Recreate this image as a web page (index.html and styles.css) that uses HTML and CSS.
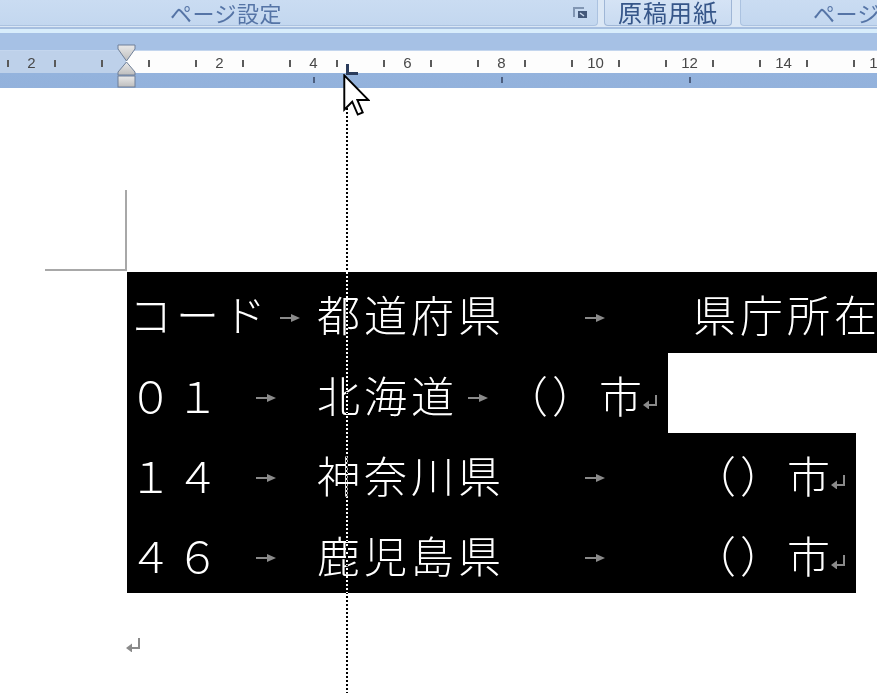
FILE: index.html
```html
<!DOCTYPE html>
<html lang="ja">
<head>
<meta charset="utf-8">
<title>原稿用紙</title>
<link rel="stylesheet" href="styles.css">
</head>
<body>
<div class="app">
  <div class="ribbon">
    <div class="group g1">
      <span class="glabel">ページ設定</span>
      <svg class="launcher" width="15" height="12" viewBox="0 0 15 12">
        <path d="M1 10V1h10" fill="none" stroke="#8196b3" stroke-width="2"/>
        <rect x="5" y="4" width="9" height="7" fill="#44597a"/>
        <path d="M7 6l4 3" stroke="#c9d8ec" stroke-width="1.5"/>
      </svg>
    </div>
    <div class="group g2"><span class="blabel">原稿用紙</span></div>
    <div class="group g3"><span class="glabel">ページ</span></div>
  </div>
  <div class="ribbon-edge"></div>
  <div class="ruler">
    <div class="strip">
      <span class="cell"></span><i class="tick"></i>
      <span class="cell">2</span><i class="tick"></i>
      <span class="cell"></span><i class="tick"></i>
      <span class="cell"></span><i class="tick"></i>
      <span class="cell"></span><i class="tick"></i>
      <span class="cell">2</span><i class="tick"></i>
      <span class="cell"></span><i class="tick"></i>
      <span class="cell">4</span><i class="tick"></i>
      <span class="cell"></span><i class="tick"></i>
      <span class="cell">6</span><i class="tick"></i>
      <span class="cell"></span><i class="tick"></i>
      <span class="cell">8</span><i class="tick"></i>
      <span class="cell"></span><i class="tick"></i>
      <span class="cell">10</span><i class="tick"></i>
      <span class="cell"></span><i class="tick"></i>
      <span class="cell">12</span><i class="tick"></i>
      <span class="cell"></span><i class="tick"></i>
      <span class="cell">14</span><i class="tick"></i>
      <span class="cell"></span><i class="tick"></i>
      <span class="cell">16</span><i class="tick"></i>
      <span class="cell"></span>
    </div>
    <div class="stops">
      <span class="stop"><i class="stick"></i></span>
      <span class="stop"><i class="stick"></i></span>
      <span class="stop"><i class="stick"></i></span>
      <span class="stop"><i class="stick"></i></span>
    </div>
    <svg class="indent" width="19" height="44" viewBox="0 0 19 44">
      <defs>
        <linearGradient id="ig" x1="0" y1="0" x2="0" y2="1">
          <stop offset="0" stop-color="#eaeaea"/>
          <stop offset="1" stop-color="#bdbdbd"/>
        </linearGradient>
      </defs>
      <polygon points="1,1 18,1 18,5 9.5,17 1,5" fill="url(#ig)" stroke="#6e7f98" stroke-width="1"/>
      <polygon points="9.5,18 18,28 18,31 1,31 1,28" fill="url(#ig)" stroke="#6e7f98" stroke-width="1"/>
      <rect x="1" y="32" width="17" height="11" fill="url(#ig)" stroke="#6e7f98" stroke-width="1"/>
    </svg>
    <svg class="tabstop" width="12" height="11" viewBox="0 0 12 11">
      <path d="M1.5 0V9.5H12" fill="none" stroke="#2b3c5c" stroke-width="3"/>
    </svg>
  </div>
  <div class="page">
    <div class="corner"></div>
    <div class="doc">
      <div class="line l1">
        <span class="tx">コード</span>
        <span class="tab w1"><svg class="arr" width="20" height="8" viewBox="0 0 20 8"><path d="M0 4H13" stroke="#8a8a8a" stroke-width="2"/><polygon points="11,0 20,4 11,8" fill="#8a8a8a"/></svg></span>
        <span class="tx">都道府県</span>
        <span class="tab w4"><svg class="arr" width="20" height="8" viewBox="0 0 20 8"><path d="M0 4H13" stroke="#8a8a8a" stroke-width="2"/><polygon points="11,0 20,4 11,8" fill="#8a8a8a"/></svg></span>
        <span class="tx">県庁所在地</span>
      </div>
      <div class="line">
        <span class="tx">０１</span>
        <span class="tab w2"><svg class="arr" width="20" height="8" viewBox="0 0 20 8"><path d="M0 4H13" stroke="#8a8a8a" stroke-width="2"/><polygon points="11,0 20,4 11,8" fill="#8a8a8a"/></svg></span>
        <span class="tx">北海道</span>
        <span class="tab w1"><svg class="arr" width="20" height="8" viewBox="0 0 20 8"><path d="M0 4H13" stroke="#8a8a8a" stroke-width="2"/><polygon points="11,0 20,4 11,8" fill="#8a8a8a"/></svg></span>
        <span class="tx">（）市</span>
        <span class="ret"><svg width="16" height="14" viewBox="0 0 16 14"><path d="M13 0V10H4" fill="none" stroke="#8a8a8a" stroke-width="2"/><polygon points="0,10 6,5.5 6,14.5" fill="#8a8a8a"/></svg></span>
      </div>
      <div class="line">
        <span class="tx">１４</span>
        <span class="tab w2"><svg class="arr" width="20" height="8" viewBox="0 0 20 8"><path d="M0 4H13" stroke="#8a8a8a" stroke-width="2"/><polygon points="11,0 20,4 11,8" fill="#8a8a8a"/></svg></span>
        <span class="tx">神奈川県</span>
        <span class="tab w4"><svg class="arr" width="20" height="8" viewBox="0 0 20 8"><path d="M0 4H13" stroke="#8a8a8a" stroke-width="2"/><polygon points="11,0 20,4 11,8" fill="#8a8a8a"/></svg></span>
        <span class="tx">（）市</span>
        <span class="ret"><svg width="16" height="14" viewBox="0 0 16 14"><path d="M13 0V10H4" fill="none" stroke="#8a8a8a" stroke-width="2"/><polygon points="0,10 6,5.5 6,14.5" fill="#8a8a8a"/></svg></span>
      </div>
      <div class="line">
        <span class="tx">４６</span>
        <span class="tab w2"><svg class="arr" width="20" height="8" viewBox="0 0 20 8"><path d="M0 4H13" stroke="#8a8a8a" stroke-width="2"/><polygon points="11,0 20,4 11,8" fill="#8a8a8a"/></svg></span>
        <span class="tx">鹿児島県</span>
        <span class="tab w4"><svg class="arr" width="20" height="8" viewBox="0 0 20 8"><path d="M0 4H13" stroke="#8a8a8a" stroke-width="2"/><polygon points="11,0 20,4 11,8" fill="#8a8a8a"/></svg></span>
        <span class="tx">（）市</span>
        <span class="ret"><svg width="16" height="14" viewBox="0 0 16 14"><path d="M13 0V10H4" fill="none" stroke="#8a8a8a" stroke-width="2"/><polygon points="0,10 6,5.5 6,14.5" fill="#8a8a8a"/></svg></span>
      </div>
      <div class="line empty">
        <span class="ret"><svg width="16" height="14" viewBox="0 0 16 14"><path d="M13 0V10H4" fill="none" stroke="#8a8a8a" stroke-width="2"/><polygon points="0,10 6,5.5 6,14.5" fill="#8a8a8a"/></svg></span>
      </div>
    </div>
  </div>
  <div class="guide"></div>
  <svg class="cursor" width="27" height="43" viewBox="0 0 12.6 20">
    <path d="M0.6 0.6V16.6L4.3 12.9L6.9 18.9L9.2 17.9L6.7 12.1H11.9Z" fill="#fff" stroke="#000" stroke-width="0.9" stroke-linejoin="miter"/>
  </svg>
</div>
</body>
</html>
```

FILE: styles.css
```css
html, body {
  margin: 0;
  padding: 0;
  background: #ffffff;
}
body {
  width: 877px;
  height: 693px;
  overflow: hidden;
  font-family: "Noto Sans CJK JP", "Liberation Sans", sans-serif;
}
.app {
  position: relative;
  width: 877px;
  height: 693px;
  overflow: hidden;
  display: flex;
  flex-direction: column;
}

/* ribbon */
.ribbon {
  height: 27px;
  display: flex;
  background: #dbe7f5;
  flex: none;
}
.group {
  height: 26px;
  display: flex;
  align-items: flex-start;
  background: linear-gradient(#cadcf2, #c3d7ef);
  border: 1px solid #abc2e0;
  border-top: none;
  border-radius: 0 0 4px 4px;
  box-sizing: border-box;
  flex: none;
}
.g1 {
  width: 598px;
  padding-left: 170px;
  padding-right: 9px;
  border-left: none;
  border-radius: 0 0 4px 0;
}
.g2 {
  width: 128px;
  margin-left: 6px;
  justify-content: center;
  background: linear-gradient(#d5e3f5, #c9dbf1);
  border-color: #9fb6d6;
}
.g3 {
  flex: 1;
  margin-left: 8px;
  padding-left: 72px;
  border-right: none;
  border-radius: 0 0 0 4px;
}
.glabel {
  font-size: 22px;
  line-height: 22px;
  margin-top: 1px;
  color: #5574a6;
  white-space: nowrap;
  letter-spacing: 0.5px;
}
.blabel {
  font-size: 24px;
  line-height: 24px;
  margin-top: 0;
  color: #365689;
  white-space: nowrap;
  letter-spacing: 1px;
}
.launcher {
  margin-left: auto;
  margin-top: 7px;
  display: block;
}
.ribbon-edge {
  height: 6px;
  flex: none;
  background: linear-gradient(#a7bfe0 0 2px, #d8edfb 2px 6px);
}

/* ruler */
.ruler {
  position: relative;
  height: 55px;
  flex: none;
  background: linear-gradient(#a6c1e5 0 17px, #94b3dd 40px, #93b2dc 55px);
  padding-top: 17px;
  box-sizing: border-box;
}
.strip {
  height: 23px;
  display: flex;
  align-items: center;
  margin-left: -38px;
  width: 960px;
  background: linear-gradient(to right, #bed1ea 0 164px, #fdfdfd 164px);
  border-top: 1px solid #c4d6ee;
  box-sizing: border-box;
  font-family: "Liberation Sans", sans-serif;
  font-size: 15px;
  color: #484848;
}
.cell {
  width: 45px;
  flex: none;
  text-align: center;
  line-height: 23px;
  padding-top: 1px;
}
.tick {
  width: 2px;
  height: 7px;
  margin-top: 3px;
  background: #5a5a5a;
  flex: none;
}
.stops {
  display: flex;
  margin-left: 127px;
  height: 15px;
  align-items: center;
}
.stop {
  width: 188px;
  flex: none;
  display: flex;
  justify-content: flex-end;
}
.stick {
  width: 2px;
  height: 6px;
  margin-top: -2px;
  background: #4d5f80;
}
.indent {
  position: absolute;
  left: 117px;
  top: 11px;
}
.tabstop {
  position: absolute;
  left: 346px;
  top: 31px;
}

/* page */
.page {
  flex: 1;
  background: #ffffff;
  padding-top: 102px;
}
.corner {
  margin-left: 45px;
  width: 80px;
  height: 79px;
  border-right: 2px solid #a8a8a8;
  border-bottom: 2px solid #a8a8a8;
}
.doc {
  margin-left: 127px;
  margin-top: 1px;
}
.line {
  display: flex;
  width: max-content;
  height: 80px;
  background: #000000;
  color: #ffffff;
  white-space: nowrap;
}
.l1 {
  height: 81px;
}
.line.empty {
  background: transparent;
}
.tx {
  font-size: 43px;
  font-weight: 300;
  letter-spacing: 4px;
  line-height: 80px;
  padding-top: 1px;
  padding-left: 2px;
  margin-right: -2px;
}
.tab {
  display: flex;
  justify-content: center;
  align-items: center;
  padding-top: 10px;
  flex: none;
}
.w1 { width: 47px; }
.w2 { width: 94px; }
.w4 { width: 188px; }
.arr {
  display: block;
  margin-left: -4px;
}
.ret {
  width: 24px;
  flex: none;
  display: flex;
  align-items: flex-start;
  padding-top: 42px;
  box-sizing: border-box;
}
.ret svg {
  display: block;
  margin-left: -1px;
}
.line.empty .ret {
  padding-top: 45px;
}

/* overlays */
.guide {
  position: absolute;
  left: 346px;
  top: 88px;
  width: 2px;
  height: 605px;
  background: repeating-linear-gradient(#ffffff 0 2px, transparent 2px 4px);
  mix-blend-mode: difference;
}
.cursor {
  position: absolute;
  left: 343px;
  top: 74px;
}
```
